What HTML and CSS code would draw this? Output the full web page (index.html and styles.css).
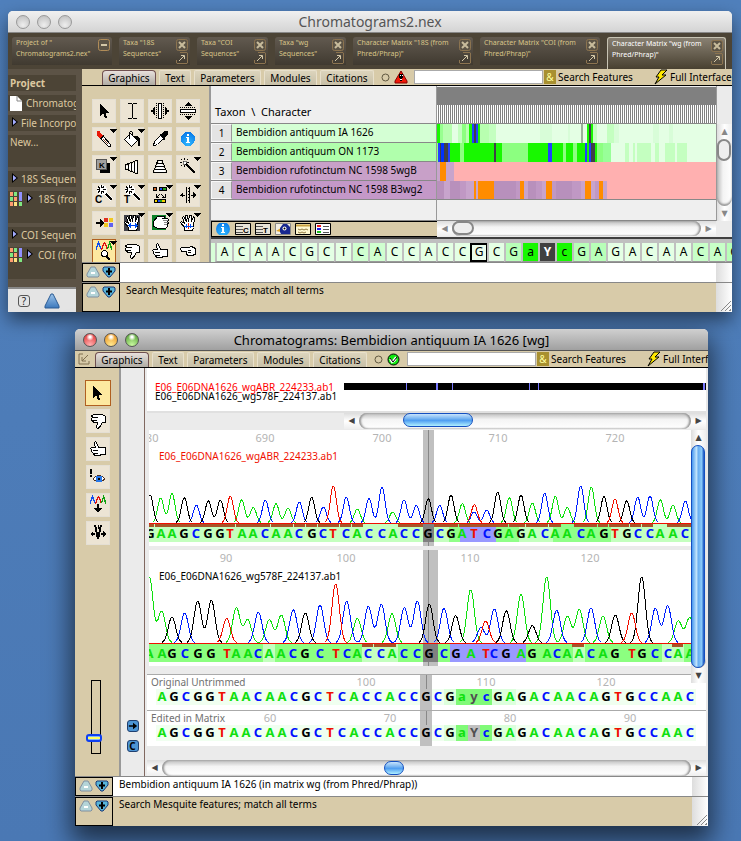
FILE: index.html
```
<!DOCTYPE html>
<html lang="en">
<head>
<meta charset="utf-8">
<title>Chromatograms2.nex</title>
<link rel="stylesheet" href="styles.css">
</head>
<body>
<svg class="defs" aria-hidden="true">
  <defs>
    <linearGradient id="gTri" x1="0" y1="0" x2="0" y2="1"><stop offset="0" stop-color="#9cc4ea"/><stop offset="1" stop-color="#3c78bc"/></linearGradient>
    <radialGradient id="gInfo" cx=".5" cy=".8" r=".8"><stop offset="0" stop-color="#30b8ff"/><stop offset="1" stop-color="#0878e8"/></radialGradient>
  </defs>
  <symbol id="drop" viewBox="0 0 8 4"><path d="M0 0h8L4 4z"/></symbol>
  <symbol id="arrow" viewBox="0 0 24 24"><path d="M8 5v12l3-3 2 5h2l-1-5h4z"/></symbol>
  <symbol id="ibeam" viewBox="0 0 24 24"><path d="M8 4.500h3l1.500 1 1.500-1h3M8 19.500h3l1.500-1 1.500 1h3M12.500 5v14" fill="none" stroke="#000"/></symbol>
  <symbol id="cols" viewBox="0 0 24 24"><path d="M10.500 4.500h3v15h-3z" fill="#fff" stroke="#000"/><path d="M8.500 4v16M15.500 4v16" stroke="#000" stroke-dasharray="1 1"/><path d="M3 11h2V9l2-1v8l-2-1v-2H3zM21 11h-2V9l-2-1v8l2-1v-2h2z"/></symbol>
  <symbol id="rows" viewBox="0 0 24 24"><path d="M4.500 10.500h15v3h-15z" fill="#fff" stroke="#000"/><path d="M4 8.500h16M4 15.500h16" stroke="#000" stroke-dasharray="1 1"/><path d="M8 7h8l-4-4zM8 17h8l-4 4z"/></symbol>
  <symbol id="brush" viewBox="0 0 24 24"><g transform="translate(.5 .5)"><path d="M9 10l2-1 7 8v2h-2l-7-7z" fill="#fff" stroke="#000"/><path d="M11 12l5 5" stroke="#804020"/><path d="M4 3l3 1 3 4-3 3-3-4z" fill="#e81808"/><path d="M7 12l4-4" stroke="#000"/></g></symbol>
  <symbol id="bucket" viewBox="0 0 24 24"><g transform="translate(.5 .5)"><path d="M4 12l6-6 7 7-6 6z" fill="#fff" stroke="#000"/><path d="M9 11V5l1-1h1l1 1v3" fill="none" stroke="#000"/><path d="M13 8h3l3 3v7h-1l-1-5z"/></g></symbol>
  <symbol id="dropper" viewBox="0 0 24 24"><g transform="translate(.5 .5)"><path d="M5 18l1-4 6-6 3 3-6 6-3 1z" fill="#fff" stroke="#000"/><path d="M11 6l2 0 3-3 3 1 0 3-3 3v2l-1 0-4-5z"/></g></symbol>
  <symbol id="info" viewBox="0 0 24 24"><circle cx="12" cy="12" r="7" fill="url(#gInfo)"/><path d="M11 7h2v2h-2zM10 10h3v5h1v1h-4v-1h1v-4h-1z" fill="#fff"/></symbol>
  <symbol id="key" viewBox="0 0 24 24"><path d="M8 8h10v10H8z"/><rect x="4.500" y="4.500" width="10" height="10" rx="1" fill="#a0a0a0" stroke="#555"/><text x="7" y="13" class="glyph">K</text></symbol>
  <symbol id="coneL" viewBox="0 0 24 24"><path d="M5 12l13-6v12z" fill="#fff"/><path d="M5.500 10v4M8.500 9v6M11.500 7v10M14.500 6v12M17.500 5v14M5 10l13-5M5 14l13 5" stroke="#000" fill="none"/></symbol>
  <symbol id="coneU" viewBox="0 0 24 24"><path d="M12 5l6 13H6z" fill="#fff"/><path d="M10 5.500h4M9 8.500h6M7 11.500h10M6 14.500h12M5 17.500h14M10 5l-5 13M14 5l5 13" stroke="#000" fill="none"/></symbol>
  <symbol id="wand" viewBox="0 0 24 24"><path d="M10 9l9 9" stroke="#000" stroke-width="2"/><path d="M8.500 3v2M8.500 10v2M4 7.500h2M11 7.500h2M5 4l1 1M12 4l-1 1M5 11l1-1" stroke="#000"/><path d="M7 6h3v3H7z" fill="#fff" stroke="#000" stroke-width=".5"/></symbol>
  <symbol id="wandC" viewBox="0 0 24 24"><path d="M12 9l8 8" stroke="#fff" stroke-width="4"/><path d="M12 9l8 8" stroke="#000" stroke-width="2"/><path d="M10 7m-5 0a5 5 0 1 0 10 0a5 5 0 1 0-10 0" fill="#fff"/><path d="M9.500 2v9M5 6.500h9M6 3.500l6 6M12 3.500l-6 6" stroke="#000"/><path d="M8 5h3v3H8z" fill="#fff"/><text x="3" y="20" class="glyph big">C</text></symbol>
  <symbol id="wandT" viewBox="0 0 24 24"><path d="M12 9l8 8" stroke="#fff" stroke-width="4"/><path d="M12 9l8 8" stroke="#000" stroke-width="2"/><path d="M10 7m-5 0a5 5 0 1 0 10 0a5 5 0 1 0-10 0" fill="#fff"/><path d="M9.500 2v9M5 6.500h9M6 3.500l6 6M12 3.500l-6 6" stroke="#000"/><path d="M8 5h3v3H8z" fill="#fff"/><text x="4" y="20" class="glyph big">T</text></symbol>
  <symbol id="swap" viewBox="0 0 24 24"><path d="M5 4h4v4H5zM11 4h8v4h-8zM6 16h12v4H6z" /><path d="M6 5h2v2H6z" fill="#c86020"/><path d="M12 5h2v2h-2zM10 17h2v2h-2z" fill="#2050f0"/><path d="M15 5h3v2h-3zM12 17h2v2h-2z" fill="#20a020"/><path d="M7 17h2v2H7zM14 17h3v2h-3z" fill="#f0d000"/><path d="M9 14l3-3M13 11l3 3M8 11v3h3M17 11v3h-3" stroke="#000" fill="none"/></symbol>
  <symbol id="split" viewBox="0 0 24 24"><path d="M10.500 4v16M13.500 4v16" stroke="#000"/><path d="M12 5v14" stroke="#000" stroke-dasharray="1 2"/><path d="M4 12h5M15 12h5" stroke="#000"/><path d="M7 9v6l-3-3zM17 9v6l3-3z"/></symbol>
  <symbol id="toGrid" viewBox="0 0 24 24"><path d="M4 11h4V8l4 4-4 4v-3H4z"/><path d="M12 7h4v4h-4z" fill="#e03020"/><path d="M17 7h4v4h-4zM12 12h4v4h-4z" fill="#f0c820"/><path d="M17 12h4v4h-4z" fill="#6060f0"/></symbol>
  <symbol id="handShape" viewBox="0 0 24 24"><path transform="translate(.5 .5)" d="M8 19v-3l-4-5 1-1 3 2-2-6 1-1 3 5-1-6h2l1 6 1-6h2v6l2-5 1 1-1 10-1 3z" fill="#fff" stroke="#000"/></symbol>
  <symbol id="handDark" viewBox="0 0 24 24"><path d="M4 4h16v16H4z" fill="#404048"/><use href="#handShape"/><path d="M9 14.500h8" stroke="#0040f0"/><path d="M11 12v5l-3-2.500zM15 12v5l3-2.500z" fill="#0050f0"/></symbol>
  <symbol id="handGreen" viewBox="0 0 24 24"><path d="M4 4h14v15H4z" fill="#0c8028"/><g transform="translate(.5 .5)"><path d="M5 10l4-5h7v2h-3 6l1 1-1 2 1 1-1 2 0 2-2 2h-7l-5-2z" fill="#fff" stroke="#000"/><path d="M14 9h5M15 11h4M15 13h3" stroke="#888"/></g></symbol>
  <symbol id="handOpen" viewBox="0 0 24 24"><use href="#handShape"/><path d="M12.500 12v6" stroke="#e02010"/><path d="M10.500 13v4M14.500 13v4" stroke="#0050f0"/><path d="M8 15.500h9" stroke="#0050f0"/></symbol>
  <symbol id="peaks" viewBox="0 0 24 24"><path d="M4.500 11V9l1-3 1-2 1 2 1 3 1 1" fill="none" stroke="#1050f0" stroke-width="1.500"/><path d="M9.500 11l1-3 1-3 1-1 1 1 1 3 1 2" fill="none" stroke="#e01010" stroke-width="1.500"/><path d="M15.500 10l1-3 1-3 1 2 1 4v1" fill="none" stroke="#10a010" stroke-width="1.500"/></symbol>
  <symbol id="peakZoom" viewBox="0 0 24 24"><use href="#peaks"/><circle cx="12.500" cy="14.500" r="3" fill="#fff" stroke="#000"/><path d="M14 17l4 4" stroke="#000" stroke-width="2"/></symbol>
  <symbol id="peakDown" viewBox="0 0 24 24"><use href="#peaks"/><path d="M11 11h2v4h3l-4 5-4-5h3z"/></symbol>
  <symbol id="thumbDown" viewBox="0 0 24 24"><g transform="translate(.5 .5)"><path d="M5 6l3-1h8l3 2v6h-3l-3 5-2 1-1-1 1-5H7l-1-2H5V9l1-1z" fill="#fff" stroke="#000"/><path d="M6 8h5M6 11h4" stroke="#000"/></g></symbol>
  <symbol id="thumbUp" viewBox="0 0 24 24"><g transform="translate(.5 .5)"><path d="M8 5l1-1 1 1 2 5h7v7h-4l-2 1H8l-1-2-2-2v-2l-1-1 1-1h4L8 7z" fill="#fff" stroke="#000"/><path d="M6 13h5M7 16h4" stroke="#000"/></g></symbol>
  <symbol id="pointL" viewBox="0 0 24 24"><g transform="translate(.5 .5)"><path d="M4 9l1-1h7l3-1 4 2v6l-4 1h-4l-1-2V12H5z" fill="#fff" stroke="#000"/><path d="M11 11h3M11 13h3" stroke="#000"/></g></symbol>
  <symbol id="eye" viewBox="0 0 24 24"><path d="M7 14q6-7 12 0-6 6-12 0z" fill="#fff" stroke="#503020"/><circle cx="13" cy="14" r="3.500" fill="#2878e8"/><circle cx="13" cy="14" r="1.500"/><path d="M4 4h2v5H4zM4 10h2v2H4z"/></symbol>
  <symbol id="vee" viewBox="0 0 24 24"><path d="M8 4h2l2 9 2-9h2l-3 14h-2z"/><path d="M12.500 4v4" stroke="#000"/><path d="M4 13l3-3v2h2v2H7v2zM20 13l-3-3v2h-2v2h2v2z"/></symbol>
  <symbol id="minusTri" viewBox="0 0 14 12"><path d="M5 1h4l4 7v2l-1 1H2l-1-1V8z" fill="#b4d4d8" stroke="#8090a0"/><path d="M5 7h4" stroke="#fff" stroke-width="2"/></symbol>
  <symbol id="plusTri" viewBox="0 0 14 12"><path d="M2 1h10l1 1v3L8 11H6L1 5V2z" fill="#58b4d8" stroke="#183878"/><path d="M7 2v7M4 5.500h6" stroke="#000" stroke-width="2"/></symbol>
  <symbol id="bolt" viewBox="0 0 14 16"><path d="M7 1h6L8 6h4L1 15l4-7H2z" fill="#ffe800" stroke="#000"/></symbol>
  <symbol id="closeBox" viewBox="0 0 12 12"><rect x=".500" y=".500" width="11" height="11" rx="2" fill="#5c5446" stroke="#8c7450"/><path d="M3 3l6 6M9 3L3 9" stroke="#c8bc9c" stroke-width="2"/></symbol>
  <symbol id="popBox" viewBox="0 0 12 12"><path d="M4 .500h7l.500.500v10l-.500.500h-10l-.500-.500V8" fill="none" stroke="#8c7450"/><path d="M3 9l5-5M5 3.500h3.500V7" stroke="#d4c8a8" fill="none"/></symbol>
  <symbol id="collapseBox" viewBox="0 0 12 12"><rect x=".500" y=".500" width="11" height="11" rx="2" fill="#5c5446" stroke="#b08c58"/><path d="M3 6h6" stroke="#d4c8a8" stroke-width="2"/></symbol>
  <symbol id="tri" viewBox="0 0 6 10"><path d="M0 0v10l6-5z"/><path d="M1 2v6l3.500-3z" fill="#a4acff"/></symbol>
  <symbol id="grid" viewBox="0 0 12 14"><path d="M0 0h3v4H0zM0 10h3v4H0zM4 5h3v4H4z" fill="#ff9c70"/><path d="M0 5h3v4H0zM4 0h3v4H4zM9 10h3v4H9z" fill="#80e880"/><path d="M9 0h3v9H9z" fill="#9090ff"/><path d="M4 10h3v4H4z" fill="#ffe080"/></symbol>
  <symbol id="listC" viewBox="0 0 16 12"><path d="M.500.500h15v11H.500z" fill="#e8e4d8" stroke="#000"/><path d="M1 3.500h7M1 6.500h7M1 9.500h7" stroke="#555"/><text x="8" y="10" class="glyph">C</text></symbol>
  <symbol id="listT" viewBox="0 0 16 12"><path d="M.500.500h15v11H.500z" fill="#e8e4d8" stroke="#000"/><path d="M1 3.500h7M1 6.500h7M1 9.500h7" stroke="#555"/><text x="8" y="10" class="glyph">T</text></symbol>
  <symbol id="bird" viewBox="0 0 16 12"><path d="M.500.500h15v11H.500z" fill="#f4f0e4" stroke="#888"/><path d="M1 8l5-3v4z" fill="#e0a020"/><path d="M5 9V5l3-4h4l3 3v7H6z" fill="#182890"/><circle cx="9.500" cy="5.500" r="2" fill="#fff"/><circle cx="9.500" cy="5.500" r="1"/></symbol>
  <symbol id="note" viewBox="0 0 16 12"><path d="M.500.500h15v11H.500z" fill="#fff8d0" stroke="#000"/><path d="M1 2.500h14" stroke="#c8a040" stroke-width="2"/><path d="M3 6l2 1 2-1 2 1 2-1 2 1M3 9l2 1 2-1 2 1 2-1" stroke="#907840" fill="none"/></symbol>
  <symbol id="legend" viewBox="0 0 16 12"><path d="M.500.500h15v11H.500z" fill="#fff" stroke="#000"/><path d="M2 2h4v2H2z" fill="#f02020"/><path d="M2 5h4v2H2z" fill="#2020f0"/><path d="M2 8h4v2H2z" fill="#20c020"/><path d="M8 3.500h6M8 6.500h6M8 9.500h6" stroke="#555"/></symbol>
</svg>

<main class="desktop">
<section class="window window-back">
  <header class="titlebar"><span class="lights"><i></i><i></i><i></i></span><h1>Chromatograms2.nex</h1></header>
  <nav class="projects">
    <div class="ptab ptab-first"><a href="#p">Project of "<br>Chromatograms2.nex"</a><span><svg><use href="#collapseBox"/></svg></span></div>
    <div class="ptab"><a href="#a">Taxa "18S<br>Sequences"</a><span><svg><use href="#closeBox"/></svg><svg><use href="#popBox"/></svg></span></div>
    <div class="ptab"><a href="#b">Taxa "COI<br>Sequences"</a><span><svg><use href="#closeBox"/></svg><svg><use href="#popBox"/></svg></span></div>
    <div class="ptab"><a href="#c">Taxa "wg<br>Sequences"</a><span><svg><use href="#closeBox"/></svg><svg><use href="#popBox"/></svg></span></div>
    <div class="ptab ptab-wide"><a href="#d">Character Matrix "18S (from<br>Phred/Phrap)"</a><span><svg><use href="#closeBox"/></svg><svg><use href="#popBox"/></svg></span></div>
    <div class="ptab ptab-wide"><a href="#e">Character Matrix "COI (from<br>Phred/Phrap)"</a><span><svg><use href="#closeBox"/></svg><svg><use href="#popBox"/></svg></span></div>
    <div class="ptab ptab-wide ptab-on"><a href="#f">Character Matrix "wg (from<br>Phred/Phrap)"</a><span><svg><use href="#closeBox"/></svg><svg><use href="#popBox"/></svg></span></div>
  </nav>
  <div class="split">
    <aside class="sidebar">
      <ul>
        <li class="side-title">Project</li>
        <li class="side-row"><svg class="doc" viewBox="0 0 12 15"><path d="M0 0h7l5 5v10H0z" fill="#fff"/><path d="M7 0v5h5" fill="none" stroke="#888"/></svg>Chromatograms2.nex</li>
        <li class="side-row"><svg class="tri"><use href="#tri"/></svg>File Incorporated</li>
        <li class="side-tall">New...</li>
        <li class="side-row"><svg class="tri"><use href="#tri"/></svg>18S Sequences</li>
        <li class="side-tall side-matrix"><svg class="mini"><use href="#grid"/></svg><svg class="tri"><use href="#tri"/></svg>18S (from Phred)</li>
        <li class="side-row"><svg class="tri"><use href="#tri"/></svg>COI Sequences</li>
        <li class="side-tall side-matrix"><svg class="mini"><use href="#grid"/></svg><svg class="tri"><use href="#tri"/></svg>COI (from Phred)</li>
      </ul>
      <footer>
        <button class="bare help" aria-label="Help">?</button>
        <svg viewBox="0 0 16 16" width="16" height="16"><path d="M7 1h2l6 12v2H1v-2z" fill="url(#gTri)" stroke="#2c5c94"/></svg>
      </footer>
    </aside>
    <div class="pane">
      <div class="toolbar" data-status="warn"></div>
      <div class="work">
        <div class="toolbox" id="toolbox"></div>
        <div class="viewer">
          <div class="matrix-wrap">
            <table class="matrix">
              <thead><tr><th colspan="2">Taxon &nbsp;\&nbsp; Character</th><td class="chars"><i></i></td></tr></thead>
              <tbody id="taxa"></tbody>
              <tfoot><tr><td colspan="2"></td><td></td></tr></tfoot>
            </table>
            <div class="vrail"><div class="vscroll grey" role="scrollbar" aria-orientation="vertical" aria-controls="taxa" aria-valuenow="5"><b>▲</b><span><i></i></span><b>▼</b></div></div>
          </div>
          <div class="matrix-foot">
            <div class="infobar"><svg><use href="#info" x="-4" y="-6" width="24" height="24"/></svg><svg><use href="#listC"/></svg><svg><use href="#listT"/></svg><svg><use href="#bird"/></svg><svg><use href="#note"/></svg><svg><use href="#legend"/></svg></div>
            <div class="hscroll grey" role="scrollbar" aria-orientation="horizontal" aria-controls="taxa" aria-valuenow="5"><b>◀</b><span><i></i></span><b>▶</b></div>
          </div>
          <div class="cells" id="cells"></div>
        </div>
      </div>
      <div class="console"><div class="steps"><svg><use href="#minusTri"/></svg><svg><use href="#plusTri"/></svg></div><p></p></div>
      <div class="console tan"><div class="steps"><svg><use href="#minusTri"/></svg><svg><use href="#plusTri"/></svg></div><p>Search Mesquite features; match all terms</p></div>
    </div>
  </div>
</section>

<section class="window window-front">
  <header class="titlebar active"><span class="lights"><i></i><i></i><i></i></span><h1>Chromatograms: Bembidion antiquum IA 1626 [wg]</h1></header>
  <div class="toolbar" data-status="ok"></div>
  <div class="front-body">
    <div class="toolcol">
      <div id="toolcol"></div>
      <label class="zoom"><input type="range" min="0" max="100" value="17" aria-label="Peak height"></label>
    </div>
    <div class="strip">
      <button class="chip" aria-label="Show arrows"><svg viewBox="0 0 12 12"><path d="M1 5h5V2l5 4-5 4V7H1z"/></svg></button>
      <button class="chip">C</button>
    </div>
    <div class="content">
      <div class="overview">
        <p><span class="red">E06_E06DNA1626_wgABR_224233.ab1</span><br>E06_E06DNA1626_wg578F_224137.ab1</p>
        <div class="coverage"></div>
      </div>
      <div class="over-scroll"><div class="hscroll blue" role="scrollbar" aria-orientation="horizontal" aria-controls="reads" aria-valuenow="20"><b>◀</b><span><i></i></span><b>▶</b></div></div>
      <div class="reads-wrap">
        <div class="reads" id="reads"></div>
        <div class="vscroll blue" role="scrollbar" aria-orientation="vertical" aria-controls="reads" aria-valuenow="50"><b>▲</b><span><i></i></span><b>▼</b></div>
      </div>
      <div class="track"><div class="track-head"><span class="wide">Original Untrimmed</span><i>100</i><i>110</i><i>120</i></div><div class="bases" data-seq="AGCGGTAACAACGCTCACCACCGCGaycGAGACAACAGTGCCAAC"></div></div>
      <div class="track"><div class="track-head"><span>Edited in Matrix</span><i>60</i><i>70</i><i>80</i><i>90</i></div><div class="bases" data-seq="AGCGGTAACAACGCTCACCACCGCGaYcGAGACAACAGTGCCAAC"></div></div>
      <div class="hscroll blue bottom" role="scrollbar" aria-orientation="horizontal" aria-controls="reads" aria-valuenow="42"><b>◀</b><span><i></i></span><b>▶</b></div>
    </div>
  </div>
  <div class="console"><div class="steps"><svg><use href="#minusTri"/></svg><svg><use href="#plusTri"/></svg></div><p>Bembidion antiquum IA 1626 (in matrix wg (from Phred/Phrap))</p></div>
  <div class="console tan"><div class="steps"><svg><use href="#minusTri"/></svg><svg><use href="#plusTri"/></svg></div><p>Search Mesquite features; match all terms</p></div>
</section>
</main>
<script src="script.js"></script>
</body>
</html>
```
FILE: styles.css
```
* { box-sizing: border-box; }
body { margin: 0; min-height: 100vh; overflow: hidden; background: linear-gradient(#5080bc, #4a78b4); font: 10px/14px "Noto Sans", "Open Sans", sans-serif; color: #000; }
.defs { position: absolute; width: 0; height: 0; visibility: hidden; }
ul, p, h1 { margin: 0; padding: 0; list-style: none; font: inherit; }
button { font: inherit; color: inherit; border: 0; padding: 0; background: none; }
svg { display: block; flex: none; }
.glyph { font: bold 8px/1 "Liberation Sans", sans-serif; }
.big { font-size: 10px; }
.red { color: #f00; }

.desktop { padding: 11px 9px 15px 8px; display: flex; flex-direction: column; gap: 17px; }
.window { border-radius: 5px 5px 0 0; overflow: hidden; background: #ebebeb; box-shadow: 0 8px 18px rgba(0, 0, 0, .5); }
.window-front { margin: 0 24px 0 67px; box-shadow: 0 12px 26px 4px rgba(0, 0, 0, .6); }
.titlebar { height: 22px; display: flex; align-items: center; padding: 0 8px; background: linear-gradient(#f0f0f0, #d4d4d4); border-bottom: 1px solid #888; }
.titlebar.active { background: linear-gradient(#d0d0d0, #a0a0a0); border-color: #555; }
.titlebar h1 { flex: 1; margin-right: 56px; text-align: center; font-size: 14px; line-height: 20px; color: #555; white-space: nowrap; }
.titlebar.active h1 { color: #000; font-size: 13px; }
.lights { display: flex; gap: 7px; }
.lights i { width: 14px; height: 14px; border-radius: 7px; border: 1px solid #999; background: radial-gradient(circle at 50% 75%, #eee, #bbb); }
.active .lights i { border-color: #555; background: radial-gradient(circle at 50% 25%, #fff 8%, transparent 35%), radial-gradient(circle at 50% 90%, #ffb0b0, #e02828); }
.active .lights i:nth-child(2) { background: radial-gradient(circle at 50% 25%, #fff 8%, transparent 35%), radial-gradient(circle at 50% 90%, #ffe890, #e88810); }
.active .lights i:nth-child(3) { background: radial-gradient(circle at 50% 25%, #fff 8%, transparent 35%), radial-gradient(circle at 50% 90%, #c8f8a0, #489828); }

.projects { display: flex; gap: 7px; height: 36px; padding: 4px 6px 0 4px; background: #4c4436; overflow: hidden; }
.ptab { flex: 0 0 71px; height: 28px; padding: 0 2px 0 4px; display: flex; justify-content: space-between; border-radius: 3px 3px 0 0; background: linear-gradient(#625a50, #403a30); }
.ptab-first { flex-basis: 100px; }
.ptab-wide { flex-basis: 120px; }
.ptab-on { flex: 1 1 118px; height: 32px; border: 1px solid #c8c4b4; border-bottom: 0; background: linear-gradient(#888072, #484030); }
.ptab a { font-size: 7px; line-height: 11px; color: #d8c488; text-decoration: none; white-space: nowrap; }
.ptab-on a { color: #fff; }
.ptab span { padding-top: 2px; display: grid; gap: 1px; align-content: start; }
.ptab svg { width: 12px; height: 12px; }

.split { display: flex; }
.sidebar { flex: 0 0 74px; width: 74px; height: 243px; padding-right: 6px; display: flex; flex-direction: column; background: #5c5346; color: #dcc8a0; overflow: hidden; }
.sidebar ul { flex: 1; padding-top: 6px; display: grid; gap: 4px; align-content: start; border-bottom: 2px solid #888; }
.sidebar li { height: 16px; display: flex; align-items: center; gap: 2px; padding-left: 2px; background: #4c4436; overflow: hidden; white-space: nowrap; }
.sidebar .side-title { font-weight: bold; }
.sidebar .side-tall { height: 32px; align-items: flex-start; }
.sidebar .side-matrix { padding-top: 1px; gap: 4px; }
.doc { width: 12px; height: 15px; margin-right: 2px; }
.tri { width: 6px; height: 10px; margin: 0 1px 2px 2px; }
.side-matrix .tri { margin: 1px 1px 0; }
.mini { width: 12px; height: 14px; }
.sidebar footer { height: 23px; display: flex; align-items: center; gap: 14px; padding-left: 10px; background: #e4e4e4; }
.help { width: 12px; height: 12px; border: 1px solid #555; border-radius: 3px; font-size: 10px; line-height: 10px; color: #222; }
.pane { flex: 1; min-width: 0; }

.toolbar { height: 17px; display: flex; align-items: stretch; background: #d8cba9; border-bottom: 1px solid #000; overflow: hidden; white-space: nowrap; }
.tabs { flex: 0 0 292px; padding: 1px 0 0 20px; display: flex; gap: 3px; }
.tabs button { padding: 0 4px; line-height: 15px; flex: 1 1 auto; border: 1px solid #e8e0cc; border-bottom: 0; border-radius: 2px 2px 0 0; background: linear-gradient(#dcd4bc, #c8c0a8); }
.tabs .on { border-color: #705050; border-radius: 4px 4px 0 0; background: linear-gradient(#e8e0dc, #b0aca4); }
.back-icon { width: 20px; margin-right: -20px; padding: 2px 3px; }
.status { flex: 0 0 40px; display: flex; align-items: center; gap: 4px; padding-left: 7px; }
.toolbar input { flex: 0 0 129px; width: 129px; margin: 1px 1px 1px 0; padding: 0 2px; border: 1px solid #aaa; background: #fff; font: inherit; }
.amp { flex: 0 0 12px; margin: 1px 2px 1px 0; background: #a89030; color: #ffffa0; line-height: 13px; }
.toolbar label { flex: 0 0 96px; line-height: 17px; }
.full { display: flex; gap: 2px; line-height: 17px; flex: none; }

.work { display: flex; }
.toolbox { flex: 0 0 127px; height: 176px; padding: 13px 9px 0 10px; display: grid; grid-template-columns: repeat(4, 24px); grid-auto-rows: 24px; gap: 4px; background: #d8cba9; overflow: hidden; }
.tool { position: relative; width: 24px; height: 24px; background: #ece4d4; border: 1px solid #e4dfd4; display: block; }
.tool > svg { width: 24px; height: 24px; margin: -1px; shape-rendering: crispEdges; }
.tool .caret { position: absolute; right: -2px; top: 1px; width: 8px; height: 4px; margin: 0; }
.tool.on { background: #fde9a0; border-color: #b06020; }
.viewer { flex: 1; min-width: 0; border-left: 2px solid #999; background: #efefef; }
.matrix-wrap { display: flex; }
.matrix { flex: 1; width: 100%; border-collapse: separate; border-spacing: 0; table-layout: fixed; }
.matrix th, .matrix td { padding: 0; border-bottom: 1px solid #888; font-weight: normal; text-align: left; white-space: nowrap; }
.matrix thead th { width: 226px; height: 38px; padding: 15px 0 0 4px; border-right: 1px solid #999; font-size: 11px; }
.matrix .chars { background: linear-gradient(#808080, #808080) 0 1px / 100% 18px no-repeat; vertical-align: bottom; }
.chars i { display: block; height: 18px; background: repeating-linear-gradient(90deg, #fff 0 1px, #808080 1px 2px); }
.matrix tbody tr { height: 19px; }
.matrix .num { float: left; width: 21px; height: 18px; line-height: 17px; text-align: center; background: #e4e4e4; border: 1px solid #f8f8f8; border-right-color: #999; }
.matrix .name { display: block; height: 18px; line-height: 17px; padding-left: 25px; }
.matrix tbody td:first-child, .matrix tfoot td:first-child { border-right: 1px solid #999; }
.matrix tbody td:last-child { border-bottom: 0; }
.matrix tbody tr:last-child td { border-bottom: 1px solid #888; }
.matrix tfoot td { height: 21px; }
.heat { width: 100%; height: 19px; }
tr:last-child .heat { height: 18px; }
.vrail { flex: 0 0 16px; padding-top: 38px; display: flex; border-left: 1px solid #999; background: #ebebeb; }
.matrix-foot { height: 16px; display: flex; padding-right: 16px; background: #ebebeb; }
.infobar { flex: 0 0 226px; display: flex; align-items: center; gap: 4px; padding-left: 3px; background: #d8cba9; border: 1px solid #000; border-right: 0; }
.infobar svg { width: 16px; height: 12px; }
.cells { height: 25px; display: flex; padding-left: 4px; border-top: 2px solid #404040; overflow: hidden; background: linear-gradient(#c0c0c0 4px, #d8ffd8 4px) ; }
.cells span { flex: 0 0 17px; height: 19px; margin-top: 4px; border-left: 2px solid #c0c0c0; border-bottom: 1px solid #999; text-align: center; font-size: 12px; line-height: 18px; }
.cells .picked { border: 2px solid #000; line-height: 14px; margin-right: -1px; flex-basis: 18px; }

.hscroll { flex: 1; display: flex; align-items: stretch; height: 15px; background: linear-gradient(#ddd, #fff 50%, #eee); }
.hscroll b, .vscroll b { font: 8px/15px "DejaVu Sans", sans-serif; color: #444; width: 15px; text-align: center; flex: none; }
.grey b { color: #888; }
.hscroll span { flex: 1; border-radius: 8px; background: linear-gradient(#bbb, #f4f4f4 40%, #fff); box-shadow: inset 2px 0 2px #999, inset -2px 0 2px #999; }
.hscroll i { display: block; height: 14px; border-radius: 7px; }
.grey i { width: 22px; border: 2px solid #888; background: #eee; }
.blue i { border: 1px solid #1450c0; background: linear-gradient(#c8e4fc, #68acf0 45%, #4898f0 50%, #b0f0ff); }
.over-scroll i { width: 70px; margin-left: 44px; }
.bottom i { width: 20px; margin-left: 42%; }
.vscroll { flex: 1; display: flex; flex-direction: column; background: linear-gradient(90deg, #ddd, #fff 50%, #eee); }
.vscroll span { flex: 1; display: flex; flex-direction: column; border-radius: 8px; background: linear-gradient(90deg, #bbb, #f4f4f4 40%, #fff); box-shadow: inset 0 -2px 2px #999; }
.vscroll i { width: 14px; height: 22px; border-radius: 7px; }
.vscroll.blue i { flex: 1; background: linear-gradient(90deg, #4898f0, #c8e8fc 40%, #68acf0 50%, #88c8f8 80%, #1450c0); }

.console { height: 20px; display: flex; border-top: 1px solid #888; background: linear-gradient(90deg, #ddd, #fff) right / 16px 100% no-repeat, #fff; }
.console p { flex: 1; margin-right: 16px; padding: 0 6px; background: #fff; overflow: hidden; white-space: nowrap; }
.console.tan { height: 30px; background-color: #d8cba9; position: relative; }
.console.tan p { background: #d8cba9; }
.console.tan::after { content: ""; position: absolute; right: 1px; bottom: 1px; width: 11px; height: 11px; background: repeating-linear-gradient(135deg, transparent 0 2px, #888 2px 3px); clip-path: polygon(100% 0, 100% 100%, 0 100%); }
.steps { flex: 0 0 38px; display: flex; gap: 2px; padding: 2px 3px; background: #d8cba9; border: 1px solid #000; }
.steps svg { width: 14px; height: 12px; }

.front-body { display: flex; border-right: 2px solid #e8e8e8; }
.toolcol { flex: 0 0 46px; display: flex; flex-direction: column; justify-content: space-between; padding: 13px 0 22px 11px; background: #d8cba9; border-right: 2px solid #999; }
#toolcol { display: grid; gap: 4px; }
#toolcol .tool.on { width: 26px; height: 26px; margin: -1px; }
.zoom { display: block; height: 74px; }
.zoom input { appearance: none; writing-mode: vertical-lr; direction: rtl; width: 10px; height: 74px; margin: 0 0 0 5px; border: 1px solid #000; background: none; overflow: visible; }
.zoom input::-webkit-slider-thumb { appearance: none; width: 16px; height: 8px; margin-left: -4px; border: 2px solid #1040f0; border-radius: 3px; background: linear-gradient(#80b0ff 1px, #ffff60 1px 3px, #80b0ff 3px); }
.strip { flex: 0 0 24px; display: flex; flex-direction: column; justify-content: flex-end; align-items: center; gap: 8px; padding-bottom: 24px; border-right: 1px solid #806860; background: #ebebeb; }
.chip { width: 12px; height: 12px; border: 1px solid #204070; border-radius: 3px; background: #4c94d4; font-weight: bold; line-height: 10px; }
.content { flex: 1; min-width: 0; padding-left: 2px; background: #ebebeb; }
.overview { height: 45px; display: flex; background: #fff; border-bottom: 2px solid #e0e0e0; padding-top: 15px; }
.overview p { flex: 0 0 197px; padding-left: 8px; line-height: 9px; white-space: nowrap; }
.coverage { flex: 1; height: 7px; }
.coverage svg { width: 100%; height: 7px; }
.over-scroll { padding-left: 197px; display: flex; height: 17px; }
.over-scroll .hscroll { height: 16px; }
.reads-wrap { display: flex; padding-left: 2px; }
.reads { flex: 1; min-width: 0; display: grid; gap: 4px; padding-bottom: 8px; }
.read { background: #fff; overflow: hidden; height: 116px; }
.read svg { width: 543px; height: 116px; }
.read text { font-size: 10px; }
.read .tick { fill: #b4b4b4; font-size: 11px; text-anchor: middle; }
.read .call { font-weight: bold; font-size: 13px; text-anchor: middle; }
.read path { fill: none; shape-rendering: crispEdges; }
.reads-wrap .vscroll { flex: 0 0 14px; margin-bottom: -9px; position: relative; z-index: 1; }
.track { height: 36px; border-top: 1px solid #aaa; background: linear-gradient(#888, #888) 279px 0 / 1px 14px no-repeat, linear-gradient(#c0c0c0, #c0c0c0) 273px 0 / 12px 100% no-repeat, #fff; }
.track-head { height: 14px; display: flex; padding-left: 4px; color: #707070; white-space: nowrap; }
.track-head span { flex: 0 0 59px; width: 59px; min-width: 0; }
.track-head .wide { flex-basis: 155px; }
.track-head i { flex: 0 0 120px; text-align: center; font-style: normal; font-size: 11px; color: #b4b4b4; }
.bases { display: flex; padding-left: 9px; overflow: hidden; }
.bases span { flex: 0 0 12px; height: 16px; line-height: 15px; text-align: center; font-size: 13px; font-weight: bold; background: #f0fff0; }
.bases .near { background: #dcffdc; }
.bases .hot { background: #80fa78; }
.bases .dim { background: #c0c0c0; color: #505050; }
.bases .sel { background: none; }
.A { color: #10e010; fill: #10e010; }
.C { color: #0010ff; fill: #0010ff; }
.G { color: #000; fill: #000; }
.T { color: #f01000; fill: #f01000; }
.Y { color: #505050; }
.bottom { margin-top: 14px; height: 16px; }
.bottom i { margin-top: 1px; }
```
FILE: script.js
```
const svgNS = 'xmlns="http://www.w3.org/2000/svg"';

/* Tool palettes */
const tool = (id, menu, on) =>
  `<button class="tool${on ? ' on' : ''}" aria-label="${id}"><svg><use href="#${id}"/></svg>${menu ? '<svg class="caret"><use href="#drop"/></svg>' : ''}</button>`;
const palette = ['arrow', 'ibeam', 'cols', 'rows', 'brush+', 'bucket+', 'dropper', 'info', 'key+', 'coneL', 'coneU', 'wand+',
  'wandC+', 'wandT+', 'swap+', 'split+', 'toGrid', 'handDark+', 'handGreen+', 'handOpen+', 'peakZoom+', 'thumbDown', 'thumbUp', 'pointL'];
document.getElementById('toolbox').innerHTML =
  palette.map(n => tool(n.replace('+', ''), n.endsWith('+'), n === 'peakZoom+')).join('');
document.getElementById('toolcol').innerHTML =
  ['arrow', 'thumbDown', 'thumbUp', 'eye', 'peakDown', 'vee'].map((n, i) => tool(n, false, i === 0)).join('');

/* Toolbars */
const status = {
  warn: '<svg width="14" height="14" viewBox="0 0 14 14"><path d="M7 1l6 10v2H1v-2z" fill="#f01808" stroke="#800"/><path d="M5 4h4v4H8v3H6V8H5z"/><path d="M6 5h1v1H6zM8 5h1v1H8zM6 9h2v1H6z" fill="#fff"/></svg>',
  ok: '<svg width="13" height="13" viewBox="0 0 13 13"><circle cx="6.5" cy="6.5" r="5.5" fill="#10e810" stroke="#000"/><path d="M3 6l2 3 4-5M6 9l3-3" fill="none" stroke="#fff" stroke-width="2"/><path d="M3 5l3 4 4-5" fill="none" stroke="#000"/></svg>'
};
document.querySelectorAll('.toolbar').forEach((bar, i) => {
  const kind = bar.dataset.status;
  const back = kind === 'ok' ? '<svg class="back-icon" viewBox="0 0 14 12" width="20" height="16"><path d="M5 1H1v10h10V8M4 8l6-6M4 4v4h4" fill="none" stroke="#807050"/></svg>' : '';
  bar.innerHTML = back +
    '<div class="tabs">' + ['Graphics', 'Text', 'Parameters', 'Modules', 'Citations']
      .map((t, n) => `<button${n ? '' : ' class="on"'}>${t}</button>`).join('') + '</div>' +
    `<div class="status"><svg width="9" height="9" viewBox="0 0 9 9"><circle cx="4.5" cy="4.5" r="3.5" fill="none" stroke="#605840"/></svg>${status[kind]}</div>` +
    `<input type="text" id="find${i}"><button class="amp">&amp;</button><label for="find${i}">Search Features</label>` +
    '<button class="full"><svg width="14" height="16"><use href="#bolt"/></svg>Full Interface</button>';
});

/* Matrix overview: each row is a list of [right edge, colour] runs */
const L = '#e4ffe4', M = '#c4ffc0', N = '#8cff80', G = '#18f800', B = '#2040ff', K = '#404048', P = '#b890bc', Q = '#c8a4cc', R = '#c098c4', O = '#ff8c00', S = '#ffb0b0';
const taxa = [
  ['Bembidion antiquum IA 1626', '#d4ffd4', [[3, G], [6, '#98ff90'], [15, '#b8ffb0'], [21, L], [25, M], [29, N], [32, '#b8ffb0'], [35, G], [37, B], [39, K], [41, B], [43, G], [52, '#b8ffb0'], [59, M], [103, L], [115, '#d8fdd8'], [131, L], [133, '#d8fdd8'], [143, L], [145, '#9ab09a'], [149, L], [151, G], [153, K], [155, G], [159, M], [169, L], [176, M], [181, '#d8fdd8'], [215, L], [221, '#d8fdd8'], [231, L], [235, '#d8fdd8'], [278, L]]],
  ['Bembidion antiquum ON 1173', '#b0ffac', [[1, N], [3, B], [4, K], [7, '#0030ff'], [11, K], [13, B], [23, G], [27, N], [57, G], [59, K], [65, G], [91, N], [111, G], [115, B], [126, G], [129, N], [136, G], [139, N], [147, G], [149, B], [151, G], [153, B], [157, K], [159, G], [165, N], [173, '#98ff98'], [187, L], [191, M], [195, L], [197, M], [199, L], [213, M], [217, L], [221, M], [227, L], [237, M], [239, L], [249, M], [278, L]]],
  ['Bembidion rufotinctum NC 1598 5wgB', '#c8a0c8', [[3, Q], [9, O], [17, Q], [278, S]]],
  ['Bembidion rufotinctum NC 1598 B3wg2', '#c498c8', [[7, P], [13, Q], [23, P], [29, R], [37, Q], [39, O], [41, Q], [57, O], [67, P], [79, P], [83, R], [87, O], [91, Q], [99, P], [105, R], [109, Q], [115, O], [119, R], [135, P], [143, R], [147, Q], [153, O], [157, Q], [161, R], [165, O], [169, Q], [278, S]]]
];
document.getElementById('taxa').innerHTML = taxa.map(([name, colour, runs], i) => {
  let x = 0;
  const rects = runs.map(([end, c]) => {
    const r = `<rect x="${x}" y="0" width="${end - x}" height="1" fill="${c}"/>`;
    x = end;
    return r;
  }).join('');
  return `<tr><td colspan="2"><span class="num">${i + 1}</span><span class="name" style="background:${colour}">${name}</span></td>` +
    `<td><svg class="heat" viewBox="0 0 278 1" preserveAspectRatio="none" shape-rendering="crispEdges">${rects}</svg></td></tr>`;
}).join('');

/* Sequence cells under the matrix */
const shade = { 8: '#d0ffd0', 9: '#d0ffd0', 15: '#ecfcec', 17: '#b8ffb8', 18: '#18f800', 19: '#404040', 20: '#18f800', 21: '#b8ffb8', 22: '#b8ffb8', 28: '#c8ffc8', 29: '#c8ffc8', 30: '#b8ffb8' };
document.getElementById('cells').innerHTML = [...'ACAACGCTCACCACCGCGaYcGAGACAACAG'].map((c, i) =>
  `<span${i === 15 ? ' class="picked"' : ''} style="background:${shade[i] || '#e4ffe4'}${i === 19 ? ';color:#fff;font-weight:bold' : ''}">${c}</span>`).join('');

/* Coverage bar */
document.querySelector('.coverage').innerHTML = '<svg viewBox="0 0 362 7" preserveAspectRatio="none"><path d="M0 0h362v7H0z"/>' +
  [[62, 1], [92, 2], [108, 1], [185, 1], [194, 1], [359, 2]].map(([x, w]) => `<path d="M${x} 0h${w}v7h-${w}z" fill="#7878ff"/>`).join('') + '</svg>';

/* Reads: base calls as letter, scan position, peak height; three scans per pixel */
const FIRST = 237, SCANS = 3, BASE = 93;
const ink = { A: '#10e010', C: '#0020ff', G: '#000', T: '#f01000' };
const reads = [
  {
    name: 'E06_E06DNA1626_wgABR_224233.ab1', red: true, sigma: 9,
    ticks: [['680', 0], ['690', 116], ['700', 233], ['710', 349], ['720', 466]],
    calls: 'G240,85 A272,75 A306,88 G343,76 C379,54 G415,67 G451,69 T481,81 A515,70 A550,47 C586,69 A618,58 A654,45 C688,63 G725,77 C760,48 T790,112 C829,78 A862,42 C897,74 C936,108 A968,33 C1002,70 C1039,53 G1075,73 C1109,53 G1143,84 A1177,58 T1213,55 C1250,39 G1283,93 A1318,76 G1353,84 A1387,60 C1424,90 A1456,80 A1492,47 C1532,112 A1564,108 G1602,80 T1635,72 G1670,67 C1703,78 C1740,81 A1771,70 A1809,54 C1846,66',
    extra: [['C', 1212, 33]],
    band: '#c4ffbf', bands: [[300, 11, '#90ff88'], [311, 36, '#9999ff'], [347, 23, '#90ff88'], [404, 58, '#90ff88']],
    quality: [[0, 5], [6, 80], [87, 34], [122, 22], [145, 11], [157, 11], [169, 21], [191, 11], [203, 11], [249, 60], [310, 49], [360, 16], [377, 22], [400, 12], [425, 23], [449, 10], [460, 20], [481, 11], [493, 11], [518, 25]],
    column: [274, 11]
  },
  {
    name: 'E06_E06DNA1626_wg578F_224137.ab1', sigma: 11,
    ticks: [['90', 77], ['100', 197], ['110', 321], ['120', 441]],
    calls: 'A238,198 A275,96 G306,78 C344,90 G383,126 G424,128 T470,74 A499,106 A533,70 C565,92 A598,70 A634,84 C670,100 G706,90 C750,114 T797,178 C830,126 A862,74 C895,110 C934,116 A966,88 C1003,106 C1042,126 G1078,116 C1122,104 G1157,82 A1202,160 T1247,66 C1273,102 G1309,97 A1353,146 G1387,52 A1430,198 C1460,98 A1492,80 A1528,100 C1563,106 A1599,80 G1636,84 T1685,90 G1715,198 C1756,104 C1793,112 A1825,66 A1859,76',
    extra: [['C', 1233, 46]],
    band: '#8cff80', bands: [[114, 12, '#c4ffbf'], [213, 36, '#c4ffbf'], [301, 76, '#9999ff'], [424, 12, '#c4ffbf'], [513, 22, '#c4ffbf']],
    quality: [[213, 11], [225, 11], [236, 11], [423, 12], [523, 11]],
    column: [274, 15]
  }
];

function trace(peaks, sigma) {
  let d = '', pen = false;
  for (let x = 0; x <= 543; x++) {
    const scan = FIRST + x * SCANS;
    const h = peaks.reduce((s, [, c, v]) => s + v * Math.exp(-((scan - c) ** 2) / (2 * sigma * sigma)), 0) / SCANS;
    if (h > 0.4) {
      d += `${pen ? 'L' : 'M'}${x} ${(BASE - h).toFixed(1)}`;
      pen = true;
    } else pen = false;
  }
  return d;
}

document.getElementById('reads').innerHTML = reads.map(r => {
  const calls = r.calls.split(' ').map(s => [s[0], ...s.slice(1).split(',').map(Number)]);
  const all = calls.concat(r.extra);
  const [cx, cw] = r.column;
  return `<div class="read"><svg ${svgNS} viewBox="0 0 543 116">` +
    `<rect x="${cx}" width="${cw}" height="116" fill="#c0c0c0"/><rect x="${cx + 5}" width="1" height="116" fill="#888"/>` +
    `<rect y="94" width="543" height="18" fill="${r.band}"/>` +
    r.bands.map(([x, w, c]) => `<rect x="${x}" y="94" width="${w}" height="18" fill="${c}"/>`).join('') +
    r.quality.map(([x, w]) => `<rect x="${x}" y="94" width="${w}" height="3" fill="#a85428"/>`).join('') +
    `<rect x="${cx}" y="94" width="${cw}" height="18" fill="#808080"/>` +
    `<path d="M0 93.5h543" stroke="#f01000"/>` +
    Object.keys(ink).map(k => `<path d="${trace(all.filter(p => p[0] === k), r.sigma)}" stroke="${ink[k]}"/>`).join('') +
    r.ticks.map(([t, x]) => `<text class="tick" x="${x}" y="12">${t}</text>`).join('') +
    `<text x="10" y="30"${r.red ? ' class="T"' : ''}>${r.name}</text>` +
    calls.map(([b, p]) => `<text class="call ${b}" x="${Math.round((p - FIRST) / SCANS)}" y="108">${b}</text>`).join('') +
    '</svg></div>';
}).join('');

/* Consensus tracks */
document.querySelectorAll('.bases').forEach(el => {
  el.innerHTML = [...el.dataset.seq].map((c, i) => {
    const bg = i === 22 ? 'sel' : c === 'Y' ? 'dim' : i >= 25 && i <= 27 ? 'hot' : i === 24 || i === 28 || i === 29 ? 'near' : '';
    return `<span class="${c.toUpperCase()} ${bg}">${c}</span>`;
  }).join('');
});
```
